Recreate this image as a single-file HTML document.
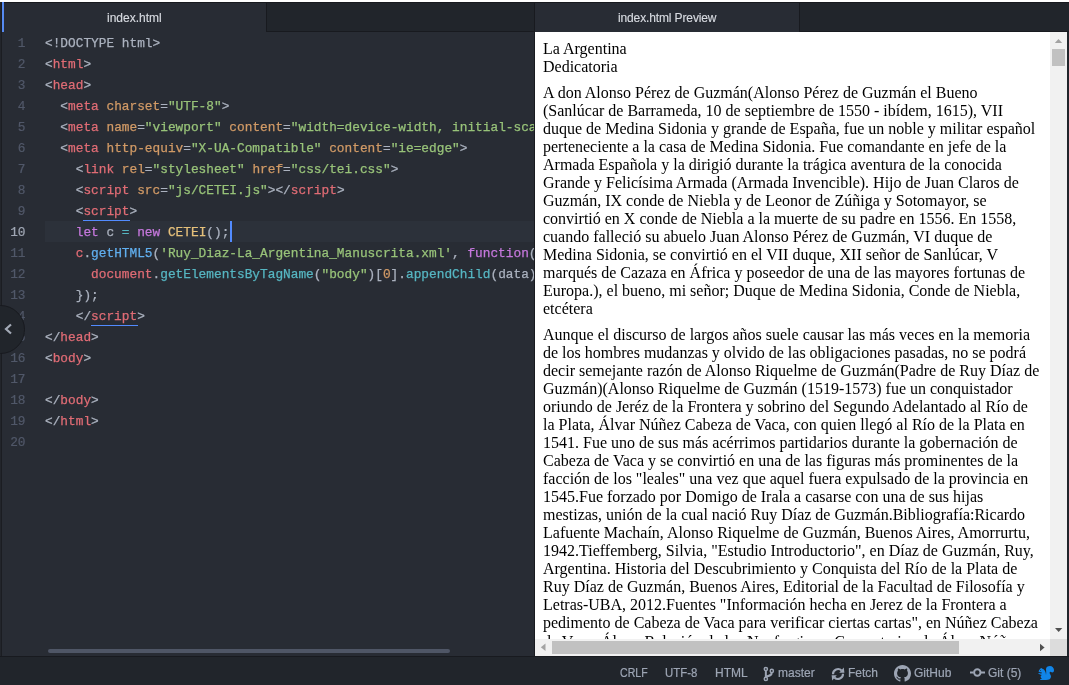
<!DOCTYPE html>
<html><head><meta charset="utf-8">
<style>
html,body{margin:0;padding:0;width:1069px;height:685px;overflow:hidden;background:#fff;position:relative}
*{box-sizing:border-box}
.abs{position:absolute}
#left{position:absolute;left:0;top:2px;width:535px;height:654px;background:#282c34;overflow:hidden}
#lborder{position:absolute;left:0;top:2px;width:2px;height:654px;background:#1b1d22;border-left:1px solid #22252b}
#tabbar1{position:absolute;left:0;top:2px;width:535px;height:30px;background:#21252b;border-top:1px solid #181a1f;border-bottom:1px solid #181a1f}
#tab1{position:absolute;left:2px;top:2px;width:265px;height:30px;background:#282c34;border-right:1px solid #181a1f;border-top:1px solid #181a1f}
#tab1 .ind{position:absolute;left:0;top:-1px;width:2px;height:30px;background:#568af2}
.tabt{position:absolute;margin-top:1px;-webkit-text-stroke:0.15px #d7dae0;font-family:"Liberation Sans",sans-serif;font-size:12px;color:#d7dae0;white-space:nowrap}
#gutter{position:absolute;left:2px;top:32px;width:40px;height:624px}
.ln{position:absolute;left:0;margin-top:1px;-webkit-text-stroke-width:0.2px;width:23.5px;text-align:right;font-family:"Liberation Mono",monospace;font-size:12.8px;color:#515869;height:21px;line-height:21px}
.cl{position:absolute;left:45px;margin-top:1px;-webkit-text-stroke-width:0.25px;font-family:"Liberation Mono",monospace;font-size:12.8px;line-height:21px;height:21px;white-space:pre;color:#abb2bf}
.p{color:#abb2bf}.t{color:#e06c75}.a{color:#d19a66}.s{color:#98c379}.k{color:#c678dd}.f{color:#61afef}.c{color:#56b6c2}.y{color:#e5c07b}.n{color:#d19a66}
.ul{}
#curline{position:absolute;left:45px;top:221px;width:490px;height:21px;background:#2c313a}
#cursor{position:absolute;left:230px;top:221px;width:2px;height:21px;background:#528bff}
#dock{position:absolute;left:-24.5px;top:305px;width:49px;height:49px;border-radius:50%;background:#21252b;border:1px solid #181a1f}
#hs{position:absolute;left:48px;top:649px;width:402px;height:4px;border-radius:2px;background:#4f5666}

#right{position:absolute;left:534px;top:2px;width:535px;height:654px;background:#21252b}
#rborder{position:absolute;left:534px;top:2px;width:1px;height:654px;background:#181a1f}
#tabbar2{position:absolute;left:535px;top:2px;width:534px;height:30px;background:#21252b;border-top:1px solid #181a1f;border-bottom:1px solid #181a1f}
#tab2{position:absolute;left:535px;top:2px;width:265px;height:30px;background:#282c34;border-right:1px solid #181a1f;border-top:1px solid #181a1f}
#preview{position:absolute;left:535px;top:32px;width:532px;height:624px;background:#fff;overflow:hidden}
#ptext{position:absolute;left:8px;top:0;}
.pb{position:absolute;left:0;font-family:"Liberation Serif",serif;font-size:16px;line-height:18px;color:#000;white-space:nowrap}
#vsb{position:absolute;left:515px;top:0;width:17px;height:607px;background:#f1f1f1}
#hsb{position:absolute;left:0;top:607px;width:515px;height:17px;background:#f1f1f1}
#corner{position:absolute;left:515px;top:607px;width:17px;height:17px;background:#dcdcdc}

#status{position:absolute;left:0;top:656px;width:1069px;height:29px;background:#21252b;border-top:1px solid #181a1f}
.st{position:absolute;top:7px;-webkit-text-stroke:0.2px #9da5b4;font-family:"Liberation Sans",sans-serif;font-size:12px;line-height:18px;color:#9da5b4;white-space:nowrap}
</style></head><body><div id="root" style="position:absolute;left:0;top:0;width:1069px;height:685px;will-change:transform">
<div id="left"></div>
<div id="curline"></div>
<div id="tabbar1"></div>
<div id="tab1"><div class="ind"></div></div>
<div class="tabt" style="left:107px;top:10px">index.html</div>
<div id="lborder"></div>

<div id="gutter">
<div class="ln" style="top:0px">1</div>
<div class="ln" style="top:21px">2</div>
<div class="ln" style="top:42px">3</div>
<div class="ln" style="top:63px">4</div>
<div class="ln" style="top:84px">5</div>
<div class="ln" style="top:105px">6</div>
<div class="ln" style="top:126px">7</div>
<div class="ln" style="top:147px">8</div>
<div class="ln" style="top:168px">9</div>
<div class="ln" style="top:189px;color:#a0a7b4">10</div>
<div class="ln" style="top:210px">11</div>
<div class="ln" style="top:231px">12</div>
<div class="ln" style="top:252px">13</div>
<div class="ln" style="top:273px">14</div>
<div class="ln" style="top:294px">15</div>
<div class="ln" style="top:315px">16</div>
<div class="ln" style="top:336px">17</div>
<div class="ln" style="top:357px">18</div>
<div class="ln" style="top:378px">19</div>
<div class="ln" style="top:399px">20</div>
</div>
<div id="code">
<div class="cl" style="top:32px"><span class="p">&lt;!DOCTYPE html&gt;</span></div>
<div class="cl" style="top:53px"><span class="p">&lt;</span><span class="t">html</span><span class="p">&gt;</span></div>
<div class="cl" style="top:74px"><span class="p">&lt;</span><span class="t">head</span><span class="p">&gt;</span></div>
<div class="cl" style="top:95px"><span class="p">  &lt;</span><span class="t">meta</span><span class="p"> </span><span class="a">charset</span><span class="p">=</span><span class="s">&quot;UTF-8&quot;</span><span class="p">&gt;</span></div>
<div class="cl" style="top:116px"><span class="p">  &lt;</span><span class="t">meta</span><span class="p"> </span><span class="a">name</span><span class="p">=</span><span class="s">&quot;viewport&quot;</span><span class="p"> </span><span class="a">content</span><span class="p">=</span><span class="s">&quot;width=device-width, initial-scale=1.0&quot;</span><span class="p">&gt;</span></div>
<div class="cl" style="top:137px"><span class="p">  &lt;</span><span class="t">meta</span><span class="p"> </span><span class="a">http-equiv</span><span class="p">=</span><span class="s">&quot;X-UA-Compatible&quot;</span><span class="p"> </span><span class="a">content</span><span class="p">=</span><span class="s">&quot;ie=edge&quot;</span><span class="p">&gt;</span></div>
<div class="cl" style="top:158px"><span class="p">    &lt;</span><span class="t">link</span><span class="p"> </span><span class="a">rel</span><span class="p">=</span><span class="s">&quot;stylesheet&quot;</span><span class="p"> </span><span class="a">href</span><span class="p">=</span><span class="s">&quot;css/tei.css&quot;</span><span class="p">&gt;</span></div>
<div class="cl" style="top:179px"><span class="p">    &lt;</span><span class="t">script</span><span class="p"> </span><span class="a">src</span><span class="p">=</span><span class="s">&quot;js/CETEI.js&quot;</span><span class="p">&gt;&lt;/</span><span class="t">script</span><span class="p">&gt;</span></div>
<div class="cl" style="top:200px"><span class="p">    &lt;</span><span class="t ul">script</span><span class="p">&gt;</span></div>
<div class="cl" style="top:221px"><span class="p">    </span><span class="k">let</span><span class="p"> c </span><span class="c">=</span><span class="p"> </span><span class="k">new</span><span class="p"> </span><span class="y">CETEI</span><span class="p">();</span></div>
<div class="cl" style="top:242px"><span class="p">    </span><span class="t">c</span><span class="p">.</span><span class="f">getHTML5</span><span class="p">(</span><span class="s">&#x27;Ruy_Diaz-La_Argentina_Manuscrita.xml&#x27;</span><span class="p">, </span><span class="k">function</span><span class="p">(data){</span></div>
<div class="cl" style="top:263px"><span class="p">      </span><span class="t">document</span><span class="p">.</span><span class="c">getElementsByTagName</span><span class="p">(</span><span class="s">&quot;body&quot;</span><span class="p">)[</span><span class="n">0</span><span class="p">]</span><span class="p">.</span><span class="c">appendChild</span><span class="p">(data);</span></div>
<div class="cl" style="top:284px"><span class="p">    });</span></div>
<div class="cl" style="top:305px"><span class="p">    &lt;/</span><span class="t ul">script</span><span class="p">&gt;</span></div>
<div class="cl" style="top:326px"><span class="p">&lt;/</span><span class="t">head</span><span class="p">&gt;</span></div>
<div class="cl" style="top:347px"><span class="p">&lt;</span><span class="t">body</span><span class="p">&gt;</span></div>
<div class="cl" style="top:368px"></div>
<div class="cl" style="top:389px"><span class="p">&lt;/</span><span class="t">body</span><span class="p">&gt;</span></div>
<div class="cl" style="top:410px"><span class="p">&lt;/</span><span class="t">html</span><span class="p">&gt;</span></div>
<div class="cl" style="top:431px"></div>
</div>
<div id="cursor"></div>
<div class="abs" style="left:83px;top:220px;width:47px;height:1px;background:#528bff"></div>
<div class="abs" style="left:91px;top:325px;width:47px;height:1px;background:#528bff"></div>
<div id="dock"></div>
<svg class="abs" style="left:0;top:318px" width="20" height="22"><polyline points="11,6.5 6,11 11,15.5" fill="none" stroke="#a3aab7" stroke-width="2.2"/></svg>
<div id="hs"></div>

<div id="right"></div>
<div id="rborder"></div>
<div id="tabbar2"></div>
<div id="tab2"></div>
<div class="tabt" style="left:618px;top:10px;letter-spacing:-0.13px">index.html Preview</div>
<div id="preview">
<div id="ptext">
<div class="pb" style="top:7.5px">La Argentina<br>Dedicatoria</div>
<div class="pb" style="top:52px">A don Alonso Pérez de Guzmán(Alonso Pérez de Guzmán el Bueno<br>(Sanlúcar de Barrameda, 10 de septiembre de 1550 - ibídem, 1615), VII<br>duque de Medina Sidonia y grande de España, fue un noble y militar español<br>perteneciente a la casa de Medina Sidonia. Fue comandante en jefe de la<br>Armada Española y la dirigió durante la trágica aventura de la conocida<br>Grande y Felicísima Armada (Armada Invencible). Hijo de Juan Claros de<br>Guzmán, IX conde de Niebla y de Leonor de Zúñiga y Sotomayor, se<br>convirtió en X conde de Niebla a la muerte de su padre en 1556. En 1558,<br>cuando falleció su abuelo Juan Alonso Pérez de Guzmán, VI duque de<br>Medina Sidonia, se convirtió en el VII duque, XII señor de Sanlúcar, V<br>marqués de Cazaza en África y poseedor de una de las mayores fortunas de<br>Europa.), el bueno, mi señor; Duque de Medina Sidonia, Conde de Niebla,<br>etcétera</div>
<div class="pb" style="top:294px">Aunque el discurso de largos años suele causar las más veces en la memoria<br>de los hombres mudanzas y olvido de las obligaciones pasadas, no se podrá<br>decir semejante razón de Alonso Riquelme de Guzmán(Padre de Ruy Díaz de<br>Guzmán)(Alonso Riquelme de Guzmán (1519-1573) fue un conquistador<br>oriundo de Jeréz de la Frontera y sobrino del Segundo Adelantado al Río de<br>la Plata, Álvar Núñez Cabeza de Vaca, con quien llegó al Río de la Plata en<br>1541. Fue uno de sus más acérrimos partidarios durante la gobernación de<br>Cabeza de Vaca y se convirtió en una de las figuras más prominentes de la<br>facción de los "leales" una vez que aquel fuera expulsado de la provincia en<br>1545.Fue forzado por Domigo de Irala a casarse con una de sus hijas<br>mestizas, unión de la cual nació Ruy Díaz de Guzmán.Bibliografía:Ricardo<br>Lafuente Machaín, Alonso Riquelme de Guzmán, Buenos Aires, Amorrurtu,<br>1942.Tieffemberg, Silvia, "Estudio Introductorio", en Díaz de Guzmán, Ruy,<br>Argentina. Historia del Descubrimiento y Conquista del Río de la Plata de<br>Ruy Díaz de Guzmán, Buenos Aires, Editorial de la Facultad de Filosofía y<br>Letras-UBA, 2012.Fuentes "Información hecha en Jerez de la Frontera a<br>pedimento de Cabeza de Vaca para verificar ciertas cartas", en Núñez Cabeza</div>
<div class="pb" style="top:601px">de Vaca, Álvar. Relación de los Naufragios y Comentarios de Álvar Núñez</div>
</div>
<div id="vsb">
<svg class="abs" style="left:0;top:0" width="17" height="607"><polygon points="4.8,11 12.2,11 8.5,7" fill="#a3a3a3"/><polygon points="5,596 12.3,596 8.65,600" fill="#505050"/></svg>
<div class="abs" style="left:2px;top:17px;width:13px;height:17px;background:#c1c1c1"></div>
</div>
<div id="hsb">
<svg class="abs" style="left:0;top:0" width="515" height="17"><polygon points="10.5,4.5 10.5,12 5.8,8.25" fill="#a3a3a3"/><polygon points="505,4.8 505,12.2 509.6,8.5" fill="#505050"/></svg>
<div class="abs" style="left:17px;top:2px;width:407px;height:13px;background:#c1c1c1"></div>
</div>
<div id="corner"></div>
</div>

<div id="status">
<div class="st" style="left:620px;transform:scaleX(0.88);transform-origin:0 0">CRLF</div>
<div class="st" style="left:665px;transform:scaleX(0.95);transform-origin:0 0">UTF-8</div>
<div class="st" style="left:715px">HTML</div>
<svg class="abs" style="left:760px;top:7px" width="20" height="20" viewBox="0 0 20 20"><g fill="none" stroke="#9da5b4"><circle cx="5.85" cy="5" r="1.6" stroke-width="1.5"/><circle cx="5.85" cy="14.9" r="1.6" stroke-width="1.5"/><circle cx="11.8" cy="6.9" r="1.6" stroke-width="1.5"/><path d="M5.85 6.6 V13.3" stroke-width="2"/><path d="M11.8 8.5 C11.8 11.4 9.6 11.9 5.85 12.4" stroke-width="2"/></g></svg>
<div class="st" style="left:778px">master</div>
<svg class="abs" style="left:828px;top:7px" width="20" height="20" viewBox="0 0 20 20"><g fill="none" stroke="#9da5b4" stroke-width="2.1"><path d="M5 10.2 A5 5 0 0 1 13.6 6.6"/><path d="M15 9.8 A5 5 0 0 1 6.4 13.4"/></g><g fill="#9da5b4"><polygon points="11.2,8.7 16.4,8.7 15.8,3.6"/><polygon points="8.8,11.3 3.6,11.3 4.2,16.4"/></g></svg>
<div class="st" style="left:848px">Fetch</div>
<svg class="abs" style="left:894px;top:8.2px" width="17" height="17" viewBox="0 0 16 16"><path fill="#9da5b4" d="M8 0C3.58 0 0 3.58 0 8c0 3.54 2.29 6.53 5.47 7.59.4.07.55-.17.55-.38 0-.19-.01-.82-.01-1.49-2.01.37-2.53-.49-2.69-.94-.09-.23-.48-.94-.82-1.13-.28-.15-.68-.52-.01-.53.63-.01 1.08.58 1.23.82.72 1.21 1.87.87 2.33.66.07-.52.28-.87.51-1.07-1.780-.2-3.640-.89-3.640-3.95 0-.87.31-1.59.82-2.15-.08-.2-.36-1.020.08-2.120 0 0 .67-.21 2.2.82.64-.18 1.32-.27 2-.27.68 0 1.36.09 2 .27 1.53-1.04 2.2-.82 2.2-.82.44 1.1.16 1.92.08 2.12.51.56.82 1.27.82 2.15 0 3.07-1.87 3.75-3.65 3.95.29.25.54.73.54 1.48 0 1.07-.01 1.93-.01 2.2 0 .21.15.46.55.38A8.013 8.013 0 0016 8c0-4.42-3.58-8-8-8z"/></svg>
<div class="st" style="left:914px">GitHub</div>
<svg class="abs" style="left:970px;top:8.4px" width="15" height="14" viewBox="0 0 15 14"><path d="M0 7.5 H3.5 M11 7.5 H15" stroke="#9da5b4" stroke-width="2"/><circle cx="7.3" cy="7.5" r="3.2" fill="none" stroke="#9da5b4" stroke-width="2"/></svg>
<div class="st" style="left:988px">Git (5)</div>
<svg class="abs" style="left:1038px;top:7.5px" width="16" height="16" viewBox="0 0 16 16"><path fill="#1185e8" fill-rule="evenodd" d="M12 1C9.79 1 8 2.31 8 3.92c0 1.94.5 3.03 0 6.08 0-4.5-2.77-6.34-4-6.34.05-.5-.48-.66-.48-.66s-.22.11-.3.34c-.27-.31-.56-.27-.56-.27l-.13.58S.7 4.290.68 6.87c.2.33 1.53.6 2.47.43.89.05.67.79.47.99C2.78 9.13 2 8 1 8S0 9 1 9s1 1 3 1c-3.09 1.2 0 4 0 4H3c-1 0-1 1-1 1h6c3 0 5-1 5-3.47 0-.85-.43-1.79-1-2.53-1.11-1.46.23-2.68 1-2 .77.68 3 1 3-2 0-2.210-1.79-4-4-4zM2.5 6c-.28 0-.5-.22-.5-.5s.22-.5.5-.5.5.22.5.5-.22.5-.5.5z"/></svg>
</div>
</div></body></html>
